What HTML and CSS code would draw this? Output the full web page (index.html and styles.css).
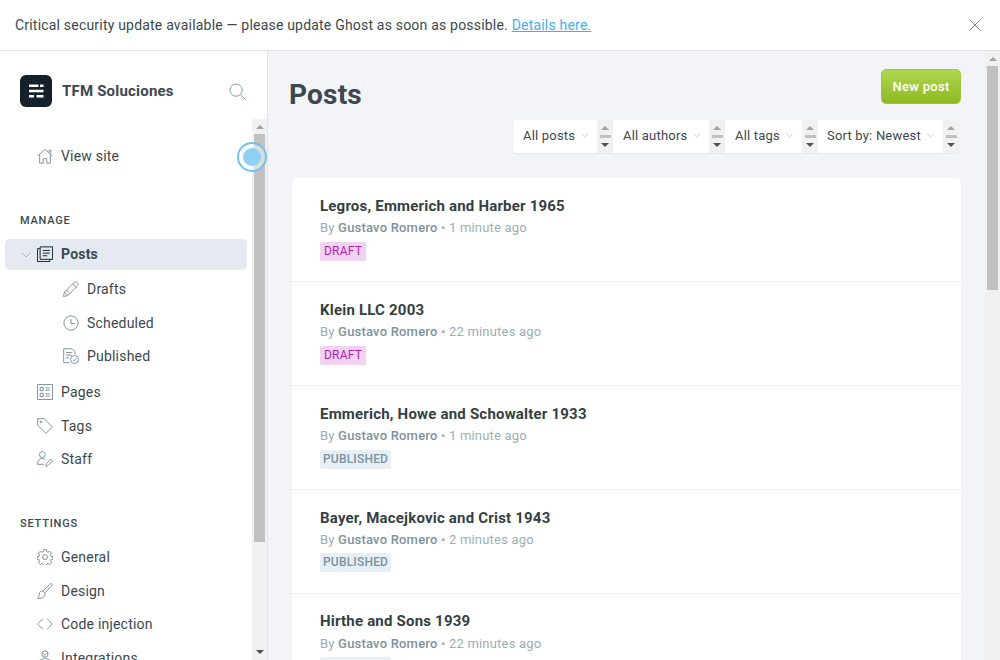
FILE: index.html
```html
<!DOCTYPE html>
<html>
<head>
  <meta charset="utf-8">
  <title>Posts - TFM Soluciones</title>
  <link rel="stylesheet" href="styles.css">
</head>
<body>
  <div class="app">
    <!-- Aviso superior -->
    <div class="banner">
      <p class="banner-text">Critical security update available — please update Ghost as soon as possible. <a href="#">Details here.</a></p>
      <svg class="banner-close" viewBox="0 0 14 14"><path d="M.5.5l13 13M13.5.5l-13 13"/></svg>
    </div>

    <div class="layout">
      <!-- Menu lateral -->
      <aside class="sidebar">
        <div class="brand">
          <div class="brand-logo">
            <svg viewBox="0 0 32 32"><path d="M9 9.500h9.500v2.600H9zM20 9.500h3.500v2.600H20zM9 14.700h14.500v2.600H9zM9 19.900h5v2.600H9zM16.500 19.900h7v2.600h-7z"/></svg>
          </div>
          <span class="brand-name">TFM Soluciones</span>
          <svg class="brand-search" viewBox="0 0 18 18"><circle cx="7.500" cy="7.500" r="6.500"/><path d="M12.300 12.300l5.200 5.200"/></svg>
        </div>

        <div class="sidebar-body">
          <nav class="nav">
            <a class="nav-item nav-first">
              <svg class="icon" viewBox="0 0 18 18"><path d="M.7 9L9 1.500 17.300 9M3 7.500v9.500h4v-5h4v5h4V7.500M13.500 4.500V2.500h2v3.800"/></svg>
              View site
            </a>

            <h4 class="nav-title nav-title-manage">MANAGE</h4>
            <a class="nav-item nav-active">
              <svg class="nav-caret" viewBox="0 0 10 6"><path d="M.5.5L5 5 9.500.5"/></svg>
              <svg class="icon icon-dark" viewBox="0 0 18 18"><path d="M3.500 15V1h14v14H3.500zM3.500 3H.5v14.500h14V15M6.500 5h8M6.500 8h8M6.500 11h5"/></svg>
              Posts
            </a>
            <a class="nav-item nav-sub">
              <svg class="icon" viewBox="0 0 18 18"><path d="M.5 17.500l1.200-5L12.700 1.500c.7-.7 2-.7 2.800 0l1 1c.8.8.8 2 0 2.800L5.500 16.300zM1.700 12.500l3.800 3.800M11 3.200l3.800 3.800M4 10.200l3.800 3.800"/></svg>
              Drafts
            </a>
            <a class="nav-item nav-sub">
              <svg class="icon" viewBox="0 0 18 18"><circle cx="9" cy="9" r="8"/><path d="M9 4.500V9.500h4"/></svg>
              Scheduled
            </a>
            <a class="nav-item nav-sub">
              <svg class="icon" viewBox="0 0 18 18"><path d="M7.500 16.500H.8V.8h9.700l3 3v3.200M3.500 5h6.500M3.500 8h6.500M3.500 11h3"/><circle cx="13" cy="13" r="4.500"/><path d="M11 13l1.500 1.500 2.500-3"/></svg>
              Published
            </a>
            <a class="nav-item nav-gap">
              <svg class="icon" viewBox="0 0 18 18"><path d="M.6.6h16.800v16.800H.6zM3.500 4h3.500v3.500H3.500zM3.500 10.500h3.500v3.500H3.500zM9.500 4.500h5M9.500 7h5M9.500 11h5M9.500 13.500h5"/></svg>
              Pages
            </a>
            <a class="nav-item">
              <svg class="icon" viewBox="0 0 18 18"><path d="M.7.7h7.300l9.300 9.300-7.300 7.300L.7 8z"/><circle cx="4.500" cy="4.500" r="1"/></svg>
              Tags
            </a>
            <a class="nav-item">
              <svg class="icon" viewBox="0 0 18 18"><circle cx="6" cy="4" r="3.300"/><path d="M.7 15c0-4 2-6.500 5.300-6.500 1.500 0 2.500.5 3.500 1.500M.7 15H8M10 17.300l.5-3 5-5 2 2-5 5z"/></svg>
              Staff
            </a>

            <h4 class="nav-title nav-title-settings">SETTINGS</h4>
            <a class="nav-item">
              <svg class="icon" viewBox="0 0 18 18"><circle cx="9" cy="9" r="2.800"/><path d="M7.500.7h3l.4 2.300 1.500.7 2-1.200 2 2.100-1.300 2 .6 1.500 2 .4v3l-2 .4-.6 1.500 1.300 2-2 2.100-2-1.200-1.500.6-.4 2.300h-3l-.4-2.300-1.500-.6-2 1.200-2-2.100 1.300-2-.6-1.500-2-.4v-3l2-.4.6-1.500-1.300-2 2-2.100 2 1.200 1.500-.7z"/></svg>
              General
            </a>
            <a class="nav-item">
              <svg class="icon" viewBox="0 0 18 18"><path d="M16 .7c1 0 1.500 1 1 1.700L9 11 6.800 8.800 14.500 1.300c.4-.4 1-.6 1.500-.6zM6.800 8.800c-2.800 0-4.300 1.500-4.300 3.700 0 2-.8 3.500-1.800 4.800 3.500 0 7.500-.5 8-3.500.2-1 .3-1.800.3-2.800"/></svg>
              Design
            </a>
            <a class="nav-item">
              <svg class="icon" viewBox="0 0 18 18"><path d="M6.500 3L.8 9l5.700 6M11.500 3l5.700 6-5.700 6"/></svg>
              Code injection
            </a>
            <a class="nav-item">
              <svg class="icon" viewBox="0 0 18 18"><circle cx="9" cy="4.500" r="3.500"/><path d="M6.500 3.500L9 6l2.500-2.500M1 12.500L9 9l8 3.500L9 16z"/></svg>
              Integrations
            </a>
          </nav>

          <div class="scrollbar scrollbar-nav">
            <span class="scroll-up"></span>
            <span class="scroll-thumb"></span>
            <span class="scroll-space"></span>
            <span class="scroll-down"></span>
          </div>
          <div class="focus-ring"><span></span></div>
        </div>
      </aside>

      <!-- Conteudo -->
      <main class="main">
        <div class="content">
          <div class="page-head">
            <h1 class="page-title">Posts</h1>
            <div class="page-actions">
              <a class="btn-new">New post</a>
              <div class="filters">
                <div class="filter filter-posts">All posts <svg viewBox="0 0 10 6"><path d="M.5.5L5 5 9.500.5"/></svg></div>
                <div class="spinner"><span class="spin-up"></span><span class="spin-bar"></span><span class="spin-down"></span></div>
                <div class="filter filter-authors">All authors <svg viewBox="0 0 10 6"><path d="M.5.5L5 5 9.500.5"/></svg></div>
                <div class="spinner"><span class="spin-up"></span><span class="spin-bar"></span><span class="spin-down"></span></div>
                <div class="filter filter-tags">All tags <svg viewBox="0 0 10 6"><path d="M.5.5L5 5 9.500.5"/></svg></div>
                <div class="spinner"><span class="spin-up"></span><span class="spin-bar"></span><span class="spin-down"></span></div>
                <div class="filter filter-sort">Sort by: Newest <svg viewBox="0 0 10 6"><path d="M.5.5L5 5 9.500.5"/></svg></div>
                <div class="spinner"><span class="spin-up"></span><span class="spin-bar"></span><span class="spin-down"></span></div>
              </div>
            </div>
          </div>

          <div class="post-list">
            <div class="post">
              <h3 class="post-title">Legros, Emmerich and Harber 1965</h3>
              <p class="post-meta">By <b>Gustavo Romero</b> • 1 minute ago</p>
              <span class="badge badge-draft">DRAFT</span>
            </div>
            <div class="post">
              <h3 class="post-title">Klein LLC 2003</h3>
              <p class="post-meta">By <b>Gustavo Romero</b> • 22 minutes ago</p>
              <span class="badge badge-draft">DRAFT</span>
            </div>
            <div class="post">
              <h3 class="post-title">Emmerich, Howe and Schowalter 1933</h3>
              <p class="post-meta">By <b>Gustavo Romero</b> • 1 minute ago</p>
              <span class="badge badge-published">PUBLISHED</span>
            </div>
            <div class="post">
              <h3 class="post-title">Bayer, Macejkovic and Crist 1943</h3>
              <p class="post-meta">By <b>Gustavo Romero</b> • 2 minutes ago</p>
              <span class="badge badge-published">PUBLISHED</span>
            </div>
            <div class="post">
              <h3 class="post-title">Hirthe and Sons 1939</h3>
              <p class="post-meta">By <b>Gustavo Romero</b> • 22 minutes ago</p>
              <span class="badge badge-published">PUBLISHED</span>
            </div>
          </div>
        </div>

        <div class="scrollbar scrollbar-main">
          <span class="scroll-up"></span>
          <span class="scroll-thumb"></span>
          <span class="scroll-space"></span>
        </div>
      </main>
    </div>
  </div>
</body>
</html>
```

FILE: styles.css
```css
* {
  box-sizing: border-box;
}

html, body {
  margin: 0;
  height: 100%;
  overflow: hidden;
}

body {
  font-family: Roboto, "Liberation Sans", sans-serif;
  color: #3c484e;
  background-color: #fff;
}

.app {
  display: flex;
  flex-direction: column;
  height: 660px;
}

/* Aviso superior */
.banner {
  display: flex;
  align-items: center;
  justify-content: space-between;
  flex: none;
  height: 51px;
  padding: 0 19px 1px 15px;
  border-bottom: 1px solid #e1e3e6;
}
.banner-text {
  margin: 0;
  font-size: 14px;
  letter-spacing: .2px;
  color: #3c484e;
}
.banner-text a {
  color: #3eb0ef;
  text-decoration: underline;
}
.banner-close {
  width: 12px;
  height: 12px;
}
.banner-close path {
  fill: none;
  stroke: #6b7278;
  stroke-width: 1;
}

.layout {
  display: flex;
  flex: 1;
  min-height: 0;
}

/* Menu lateral */
.sidebar {
  display: flex;
  flex-direction: column;
  flex: none;
  width: 268px;
  border-right: 1px solid #e1e3e6;
}

.brand {
  display: flex;
  align-items: center;
  flex: none;
  height: 68px;
  padding: 12px 21px 0 20px;
}
.brand-logo {
  width: 32px;
  height: 32px;
  border-radius: 6px;
  background-color: #15212a;
}
.brand-logo svg {
  display: block;
  width: 32px;
  height: 32px;
  fill: #fff;
}
.brand-name {
  flex: 1;
  margin-left: 10px;
  font-size: 15px;
  font-weight: 700;
  letter-spacing: .2px;
  color: #3c484e;
}
.brand-search {
  width: 17px;
  height: 17px;
  fill: none;
  stroke: #7d929f;
  stroke-width: 1;
}

.sidebar-body {
  position: relative;
  display: flex;
  flex: 1;
  min-height: 0;
}

.nav {
  flex: 1;
  min-width: 0;
  overflow: hidden;
  padding: 20px 5px 0 5px;
}

.nav-title {
  margin: 0;
  padding-left: 15px;
  font-size: 11px;
  line-height: 14px;
  font-weight: 500;
  letter-spacing: .8px;
  color: #3c484e;
}
.nav-title-manage {
  margin: 41px 0 11px;
}
.nav-title-settings {
  margin: 41px 0 9.500px;
}

.nav-item {
  display: flex;
  align-items: center;
  gap: 8px;
  height: 33.500px;
  padding-left: 32px;
  font-size: 14px;
  letter-spacing: .2px;
  color: #3c484e;
}
.nav-active {
  position: relative;
  height: 31px;
  margin-bottom: 3px;
  border-radius: 5px;
  background-color: #e5e9f2;
  font-weight: 700;
}
.nav-caret {
  position: absolute;
  left: 16px;
  top: 13px;
  width: 10px;
  height: 6px;
  fill: none;
  stroke: #abb4be;
}
.nav-sub {
  padding-left: 58px;
}
.nav-gap {
  margin-top: 2.400px;
}

.icon {
  flex: none;
  width: 16px;
  height: 16px;
  fill: none;
  stroke: #7d929f;
  stroke-width: 1.100;
}
.icon-dark {
  stroke: #15212a;
}

/* Barras de rolagem desenhadas */
.scrollbar {
  display: flex;
  flex-direction: column;
  flex: none;
  width: 15px;
  background-color: #f1f1f1;
}
.scroll-up, .scroll-down {
  flex: none;
  height: 15px;
  position: relative;
}
.scroll-up::after, .scroll-down::after {
  content: "";
  position: absolute;
  left: 4px;
  border-left: 4px solid transparent;
  border-right: 4px solid transparent;
}
.scroll-up::after {
  top: 6px;
  border-bottom: 4px solid #a3a3a3;
}
.scroll-down::after {
  top: 5px;
  border-top: 4px solid #505050;
}
.scroll-thumb {
  flex: none;
  margin: 0 2px;
  background-color: #c1c1c1;
}
.scrollbar-nav .scroll-thumb {
  height: 408px;
}
.scrollbar-main .scroll-thumb {
  height: 224px;
}
.scroll-space {
  flex: 1;
}

.focus-ring {
  position: absolute;
  left: 237px;
  top: 23px;
  width: 30px;
  height: 30px;
  padding: 4px;
  border: 2px solid #6fc3f2;
  border-radius: 50%;
  background-color: rgba(255, 255, 255, .45);
}
.focus-ring span {
  display: block;
  width: 18px;
  height: 18px;
  border-radius: 50%;
  background-color: #8fd0f5;
}

/* Conteudo */
.main {
  display: flex;
  flex: 1;
  min-width: 0;
  background-color: #f2f4f8;
}
.content {
  flex: 1;
  min-width: 0;
  overflow: hidden;
  padding: 18px 24px 0 21px;
}

.page-head {
  display: flex;
  justify-content: space-between;
  align-items: flex-start;
}
.page-title {
  margin: 6px 0 0;
  font-size: 28px;
  line-height: 40px;
  font-weight: 700;
  letter-spacing: .2px;
  color: #3c484e;
}
.page-actions {
  display: flex;
  flex-direction: column;
  align-items: flex-end;
  gap: 16px;
}

.btn-new {
  display: flex;
  align-items: center;
  justify-content: center;
  width: 80px;
  height: 35px;
  border: 1px solid #9cc63e;
  border-radius: 5px;
  background: linear-gradient(#afd650, #8fb921);
  font-size: 13px;
  font-weight: 500;
  letter-spacing: .3px;
  color: #fff;
}

.filters {
  display: flex;
  height: 33px;
  margin-right: 2px;
  border-radius: 3px;
  background-color: #fff;
  box-shadow: 0 1px 2px rgba(0, 0, 0, .06);
}
.filter {
  display: flex;
  align-items: center;
  gap: 6px;
  padding: 0 0 2px 10px;
  font-size: 13px;
  letter-spacing: .2px;
  color: #3c484e;
}
.filter svg {
  width: 7px;
  height: 5px;
  fill: none;
  stroke: #abb4be;
}
.filter-posts {
  width: 84px;
}
.filter-authors {
  width: 96px;
}
.filter-tags {
  width: 77px;
}
.filter-sort {
  width: 125px;
  padding-left: 9px;
}

.spinner {
  display: flex;
  flex-direction: column;
  align-items: center;
  justify-content: center;
  gap: 5px;
  width: 16px;
  background-color: #f1f1f1;
}
.spin-up {
  border-left: 4px solid transparent;
  border-right: 4px solid transparent;
  border-bottom: 4px solid #a3a3a3;
}
.spin-down {
  border-left: 4px solid transparent;
  border-right: 4px solid transparent;
  border-top: 4px solid #505050;
}
.spin-bar {
  width: 11px;
  height: 3px;
  background-color: #c1c1c1;
}

.post-list {
  margin: 25px 0 0 3px;
  border-radius: 5px 5px 0 0;
  background-color: #fff;
  box-shadow: 0 1px 3px rgba(0, 0, 0, .03);
}
.post {
  height: 103.900px;
  padding: 17.850px 28px 0;
  border-bottom: 1px solid #e5eff5;
}
.post-title {
  margin: 0;
  font-size: 15px;
  line-height: 20px;
  font-weight: 700;
  letter-spacing: .2px;
  color: #343f44;
}
.post-meta {
  margin: 3.150px 0 0;
  font-size: 13px;
  line-height: 18px;
  letter-spacing: .2px;
  color: #9baeb8;
}
.post-meta b {
  font-weight: 500;
  color: #7d929f;
}
.badge {
  display: inline-block;
  margin-top: 4.750px;
  height: 19px;
  border-radius: 2px;
  font-size: 12px;
  line-height: 19px;
  letter-spacing: .2px;
}
.badge-draft {
  padding: 0 4px;
  background-color: #f0d3ef;
  color: #b01eb4;
}
.badge-published {
  padding: 0 3px;
  background-color: #e5eff5;
  color: #7d929f;
  font-weight: 500;
}
```
